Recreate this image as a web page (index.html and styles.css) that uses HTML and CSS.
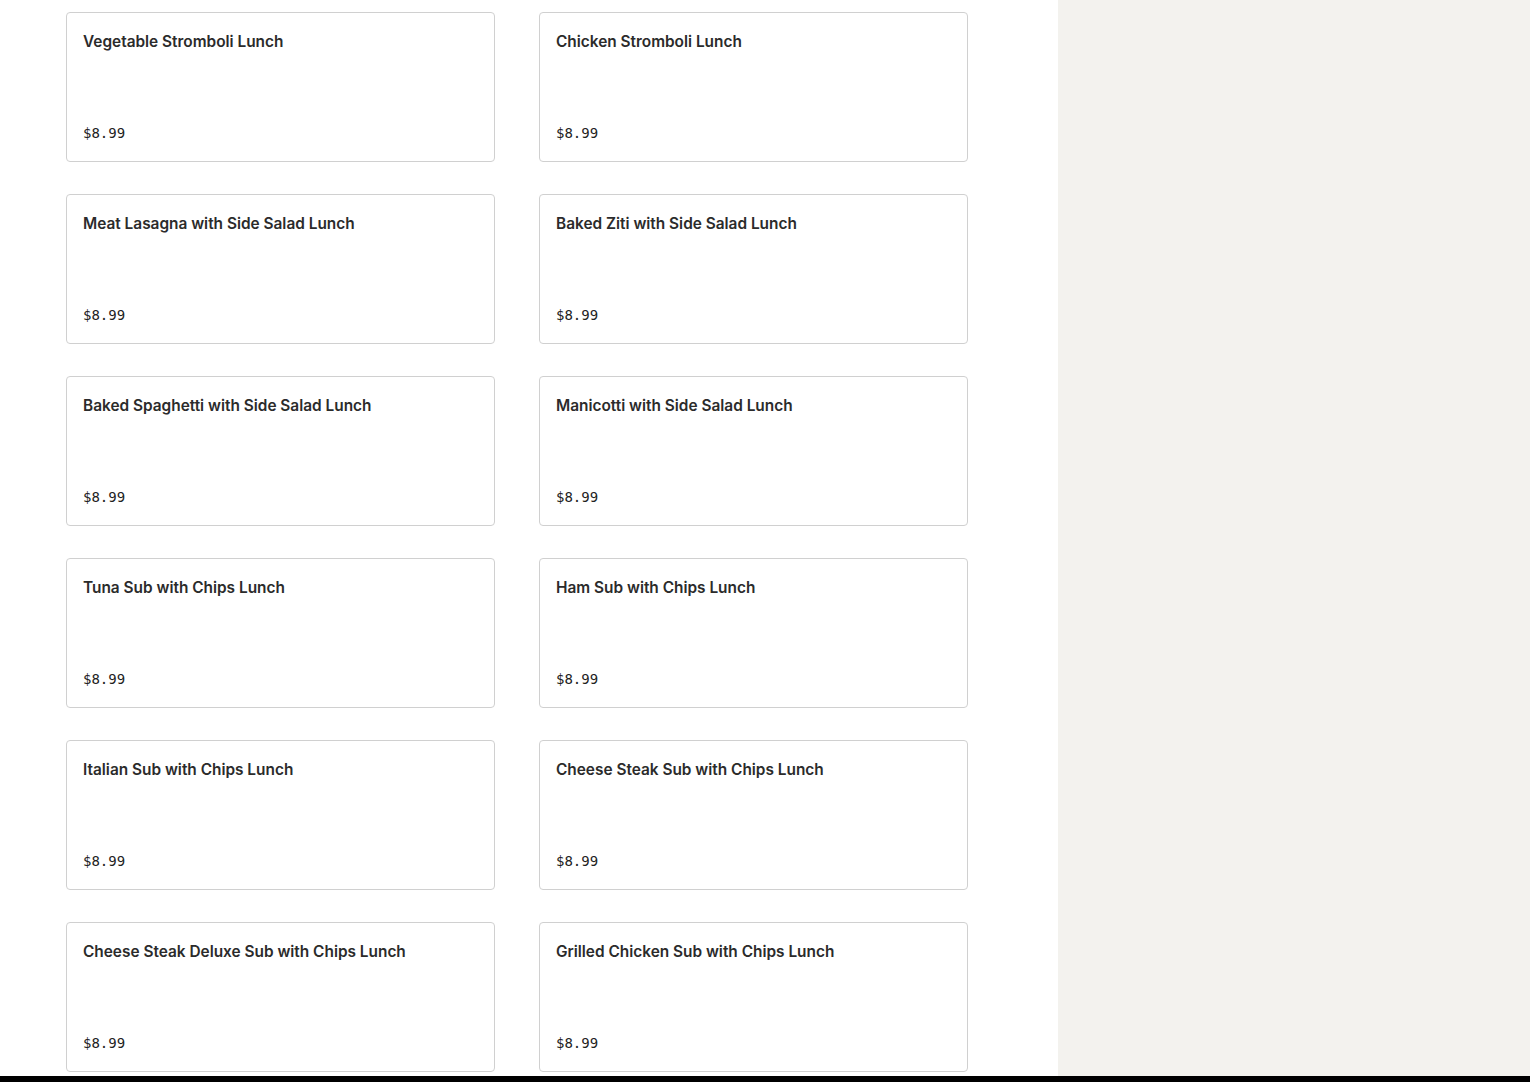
FILE: index.html
```html
<!DOCTYPE html>
<html lang="en">
<head>
<meta charset="utf-8">
<title>Lunch Menu</title>
<link rel="stylesheet" href="styles.css">
</head>
<body>
<div class="page">
  <main class="menu">
    <div class="grid">
      <div class="card"><h3 class="name">Vegetable Stromboli Lunch</h3><span class="price">$8.99</span></div>
      <div class="card"><h3 class="name">Chicken Stromboli Lunch</h3><span class="price">$8.99</span></div>
      <div class="card"><h3 class="name">Meat Lasagna with Side Salad Lunch</h3><span class="price">$8.99</span></div>
      <div class="card"><h3 class="name">Baked Ziti with Side Salad Lunch</h3><span class="price">$8.99</span></div>
      <div class="card"><h3 class="name">Baked Spaghetti with Side Salad Lunch</h3><span class="price">$8.99</span></div>
      <div class="card"><h3 class="name">Manicotti with Side Salad Lunch</h3><span class="price">$8.99</span></div>
      <div class="card"><h3 class="name">Tuna Sub with Chips Lunch</h3><span class="price">$8.99</span></div>
      <div class="card"><h3 class="name">Ham Sub with Chips Lunch</h3><span class="price">$8.99</span></div>
      <div class="card"><h3 class="name">Italian Sub with Chips Lunch</h3><span class="price">$8.99</span></div>
      <div class="card"><h3 class="name">Cheese Steak Sub with Chips Lunch</h3><span class="price">$8.99</span></div>
      <div class="card"><h3 class="name">Cheese Steak Deluxe Sub with Chips Lunch</h3><span class="price">$8.99</span></div>
      <div class="card"><h3 class="name">Grilled Chicken Sub with Chips Lunch</h3><span class="price">$8.99</span></div>
    </div>
  </main>
  <aside class="side"></aside>
</div>
<div class="bottom-bar"></div>
</body>
</html>
```
FILE: styles.css
```css
html, body {
  margin: 0;
  padding: 0;
  height: 100%;
  overflow: hidden;
  background: #ffffff;
}
body {
  font-family: "Inter", "Liberation Sans", sans-serif;
  color: #2b2b2b;
  display: flex;
  flex-direction: column;
}
.page {
  flex: 1;
  display: flex;
  min-height: 0;
}
.menu {
  width: 1058px;
  flex: none;
  padding: 12px 0 0 66px;
  box-sizing: border-box;
}
.side {
  flex: 1;
  background: #f3f2ee;
}
.grid {
  display: grid;
  grid-template-columns: 429px 429px;
  column-gap: 44px;
  row-gap: 32px;
}
.card {
  height: 150px;
  box-sizing: border-box;
  border: 1px solid #d0d0d0;
  border-radius: 4px;
  padding: 17px 16px 18px;
  display: flex;
  flex-direction: column;
  justify-content: space-between;
}
.name {
  margin: 0;
  font-size: 15.4px;
  line-height: 24px;
  font-weight: 600;
  color: #2b2b2b;
}
.price {
  font-family: "DejaVu Sans Mono", "Liberation Mono", monospace;
  font-size: 14px;
  line-height: 20px;
  font-weight: 400;
  color: #222222;
}
.bottom-bar {
  height: 6px;
  background: #000;
  flex: none;
}
```
